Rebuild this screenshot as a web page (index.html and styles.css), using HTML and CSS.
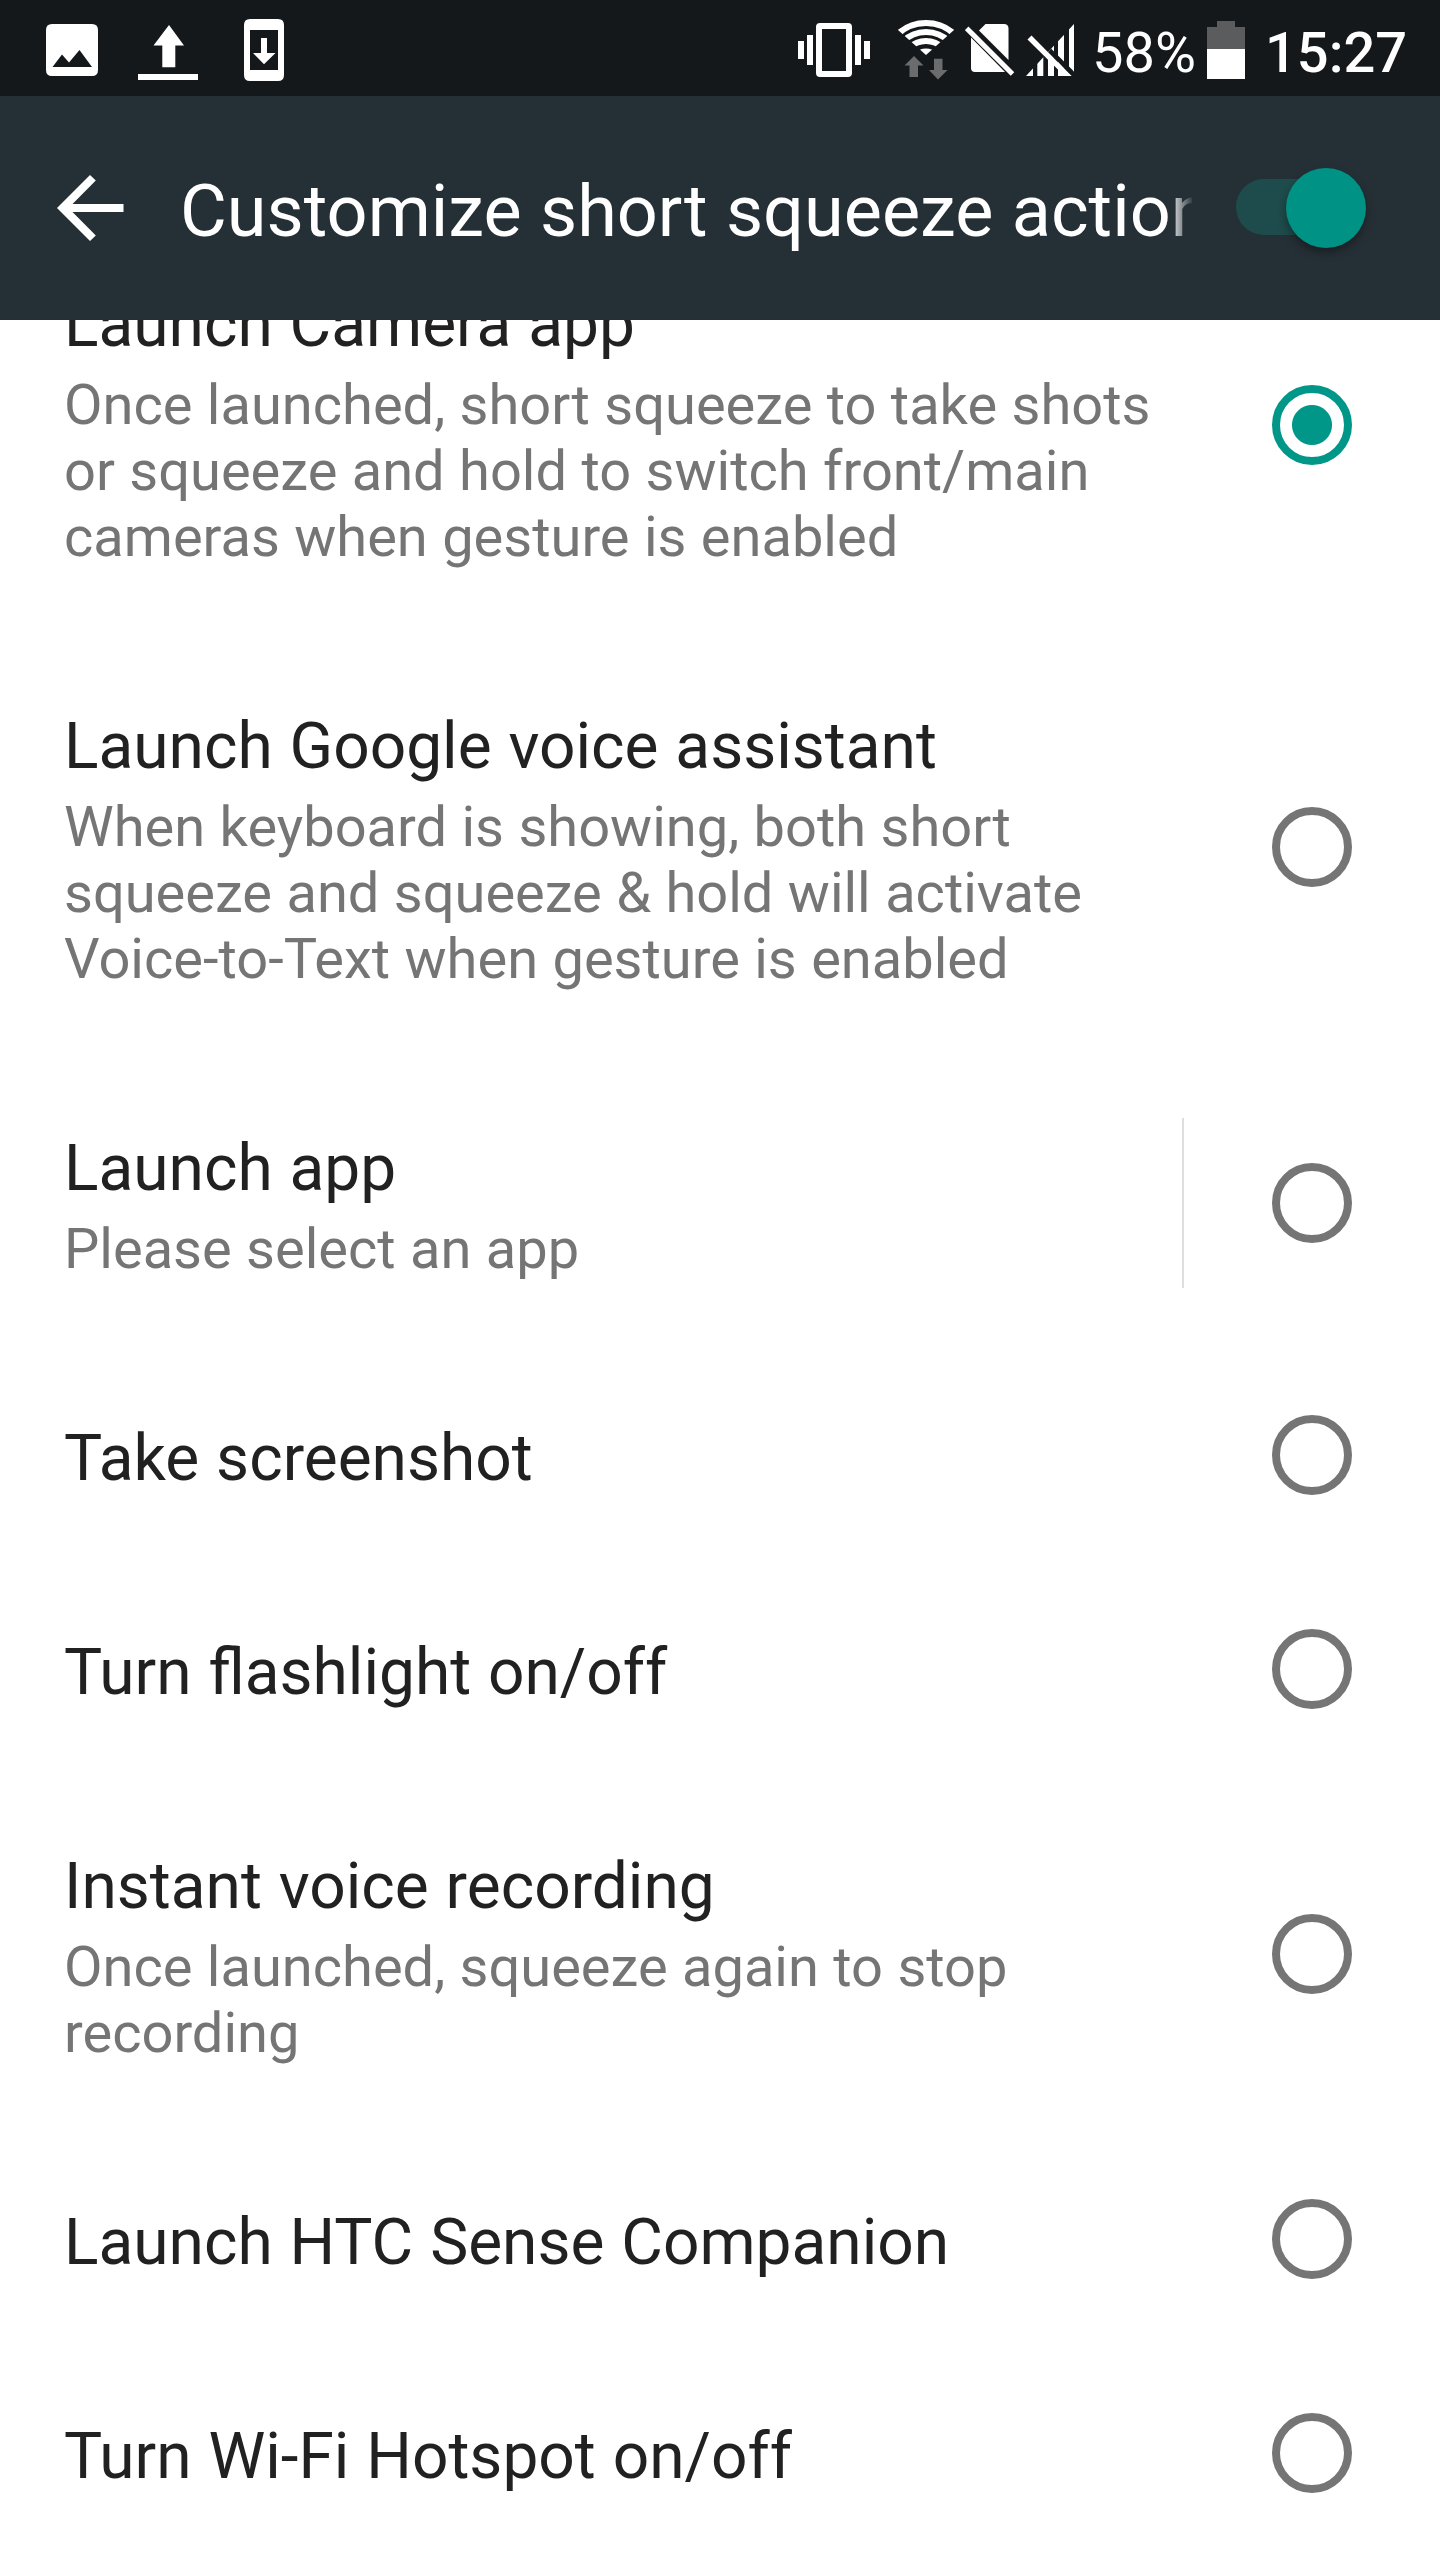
FILE: index.html
```
<!DOCTYPE html>
<html lang="en">
<head>
    <meta charset="UTF-8">
    <meta name="viewport" content="width=device-width, initial-scale=1.0">
    <title>Customize short squeeze action</title>
    <link rel="stylesheet" href="styles.css">
</head>
<body>
    <!-- Status bar -->
    <div class="status-bar">
        <div class="notifications">
            <svg width="52" height="96" viewBox="46 0 52 96">
                <path fill="#fff" fill-rule="evenodd" d="M52 24h40q6 0 6 6v40q0 6-6 6H52q-6 0-6-6V30q0-6 6-6zM52.500 67H92L79.500 50 69 62.500 62 54.500z"/>
            </svg>
            <svg width="60" height="96" viewBox="138 0 60 96">
                <path fill="#fff" d="M169 25l15 20.500h-8.700v21.800h-13V45.500h-8.800zM138 74h60v6h-60z"/>
            </svg>
            <svg width="40" height="96" viewBox="244 0 40 96">
                <path fill="#fff" fill-rule="evenodd" d="M250 19h28q6 0 6 6v50q0 6-6 6h-28q-6 0-6-6V25q0-6 6-6zM250 30v40h28V30z"/>
                <path fill="#fff" d="M261 38h6v15h8.500L264 64.300 253 53h8z"/>
            </svg>
        </div>
        <div class="system-icons">
            <svg width="72" height="96" viewBox="798 0 72 96">
                <path fill="#fff" d="M798 41h6v18h-6zM807 35h6v30h-6zM855 35h6v30h-6zM864 41h6v18h-6z"/>
                <rect x="819" y="26" width="30" height="48" rx="1" fill="none" stroke="#fff" stroke-width="6" stroke-linejoin="round"/>
            </svg>
            <svg class="wifi" width="56" height="96" viewBox="898 0 56 96">
                <clipPath id="fan"><path d="M926 55L890 23V0h72v23z"/></clipPath>
                <g clip-path="url(#fan)" fill="none" stroke="#fff" stroke-width="6">
                    <circle cx="926" cy="65" r="42"/>
                    <circle cx="926" cy="65" r="33"/>
                    <circle cx="926" cy="65" r="24"/>
                    <circle cx="926" cy="65" r="16.500" fill="#fff" stroke="none"/>
                </g>
                <path fill="#6b6c6e" d="M914 56l9.500 9.500H918V77h-8.500V65.500h-5zM934 58.700h8.500V70h5L938 79.500 929 70h5z"/>
            </svg>
            <svg class="sim" width="50" height="96" viewBox="965 0 50 96">
                <path fill="#fff" d="M979 30.500l6.500-6.500H1004q4.500 0 4.500 4.500V60zM971 37.500l34 34.500h-30q-4 0-4-4z"/>
                <path stroke="#fff" stroke-width="5" d="M966.700 28.300l45.800 45.700"/>
            </svg>
            <svg class="signal" width="48" height="96" viewBox="1026 0 48 96">
                <clipPath id="wedge"><path d="M1026 76l48-52v52z"/></clipPath>
                <g clip-path="url(#wedge)">
                    <path fill="#fff" d="M1026 60h7v16h-7zM1037.300 50h6v26h-6zM1048 40h6v36h-6zM1058 30h6v46h-6zM1069 20h5v56h-5z"/>
                    <path stroke="#14181b" stroke-width="5" d="M1031 32l50 50"/>
                    <path fill="#fff" d="M1058 62l13 14h-13z"/>
                </g>
                <path fill="#fff" d="M1027.500 39.500l4-4 40 40.500h-7z"/>
            </svg>
            <span class="percent">58%</span>
            <svg width="38" height="96" viewBox="1207 0 38 96">
                <path fill="#5b5c5e" d="M1217 21h18v6h10v22h-38V27h10z"/>
                <path fill="#fff" d="M1207 49h38v30h-38z"/>
            </svg>
            <span class="clock">15:27</span>
        </div>
    </div>

    <!-- Toolbar -->
    <div class="toolbar">
        <svg class="back" width="67" height="68" viewBox="57 174 67 68">
            <path fill="#fff" d="M57 208l33-33 5.800 5.600L72.500 204h51v8h-51l23.300 23.400L90 241z"/>
        </svg>
        <h1>Customize short squeeze action</h1>
        <div class="switch"><div class="thumb"></div></div>
    </div>

    <!-- Options -->
    <div class="options">
        <div class="list">
            <div class="option">
                <div class="text">
                    <h2>Launch Camera app</h2>
                    <p>Once launched, short squeeze to take shots<br>or squeeze and hold to switch front/main<br>cameras when gesture is enabled</p>
                </div>
                <div class="radio checked"></div>
            </div>
            <div class="option">
                <div class="text">
                    <h2>Launch Google voice assistant</h2>
                    <p>When keyboard is showing, both short<br>squeeze and squeeze &amp; hold will activate<br>Voice-to-Text when gesture is enabled</p>
                </div>
                <div class="radio"></div>
            </div>
            <div class="option">
                <div class="text">
                    <h2>Launch app</h2>
                    <p>Please select an app</p>
                </div>
                <div class="divider"></div>
                <div class="radio"></div>
            </div>
            <div class="option">
                <div class="text">
                    <h2>Take screenshot</h2>
                </div>
                <div class="radio"></div>
            </div>
            <div class="option">
                <div class="text">
                    <h2>Turn flashlight on/off</h2>
                </div>
                <div class="radio"></div>
            </div>
            <div class="option">
                <div class="text">
                    <h2>Instant voice recording</h2>
                    <p>Once launched, squeeze again to stop<br>recording</p>
                </div>
                <div class="radio"></div>
            </div>
            <div class="option">
                <div class="text">
                    <h2>Launch HTC Sense Companion</h2>
                </div>
                <div class="radio"></div>
            </div>
            <div class="option">
                <div class="text">
                    <h2>Turn Wi-Fi Hotspot on/off</h2>
                </div>
                <div class="radio"></div>
            </div>
        </div>
    </div>
</body>
</html>
```

FILE: styles.css
```
* {
    box-sizing: border-box;
}
body {
    margin: 0;
    width: 1440px;
    height: 2560px;
    display: flex;
    flex-direction: column;
    overflow: hidden;
    background-color: #fff;
    font-family: Roboto, sans-serif;
}
h1, h2, p {
    margin: 0;
    font-weight: 400;
    white-space: nowrap;
}
svg {
    display: block;
    flex: none;
}

/* Status bar */
.status-bar {
    flex: none;
    height: 96px;
    display: flex;
    justify-content: space-between;
    padding-left: 46px;
    background-color: #14181b;
    color: #fff;
    font-size: 56px;
    line-height: 66px;
}
.notifications {
    display: flex;
    gap: 40px;
}
.notifications svg:last-child {
    margin-left: 6px;
}
.system-icons {
    display: flex;
    width: 642px;
}
.wifi {
    margin-left: 28px;
}
.sim {
    margin-left: 11px;
}
.signal {
    margin-left: 11px;
}
.percent {
    width: 115px;
    margin: 20px 0 0 18px;
}
.clock {
    margin: 20px 0 0 20px;
    font-weight: 500;
}

/* Toolbar */
.toolbar {
    flex: none;
    height: 224px;
    display: flex;
    align-items: center;
    padding: 0 74px 0 57px;
    background-color: #253036;
    color: #fff;
}
.toolbar h1 {
    width: 1012px;
    margin-left: 56px;
    padding-top: 8px;
    overflow: hidden;
    font-size: 72px;
    line-height: 90px;
    word-spacing: 0.5px;
    -webkit-mask-image: linear-gradient(to right, #000 988px, transparent 1014px);
    mask-image: linear-gradient(to right, #000 988px, transparent 1014px);
}
.switch {
    width: 130px;
    height: 56px;
    margin-left: auto;
    margin-top: -2px;
    display: flex;
    align-items: center;
    justify-content: flex-end;
    border-radius: 28px;
    background: linear-gradient(to right, #1e4b4b 90px, transparent 90px);
}
.thumb {
    flex: none;
    width: 80px;
    height: 80px;
    margin-top: 2px;
    border-radius: 50%;
    background-color: #009385;
    box-shadow: 0 5px 9px rgba(0, 0, 0, 0.35);
}

/* Options */
.options {
    flex: 1;
    overflow: hidden;
}
.list {
    /* scrolled up under the toolbar */
    margin-top: -106px;
}
.option {
    display: flex;
    align-items: center;
    padding: 0 88px 0 64px;
}
.text {
    flex: 1;
    padding: 68px 0 61px;
}
.text h2 {
    color: #212121;
    font-size: 64px;
    line-height: 85px;
    word-spacing: 1px;
}
.text p {
    margin: 5px 0;
    color: #757575;
    font-size: 56px;
    line-height: 66px;
    word-spacing: 0.5px;
}
.divider {
    width: 2px;
    height: 170px;
    margin-right: 88px;
    background-color: #dedede;
}
.radio {
    flex: none;
    width: 80px;
    height: 80px;
    border: 8px solid #757575;
    border-radius: 50%;
}
.radio.checked {
    border-color: #009688;
    background: radial-gradient(circle, #009688 19.500px, transparent 20.500px);
}
```
